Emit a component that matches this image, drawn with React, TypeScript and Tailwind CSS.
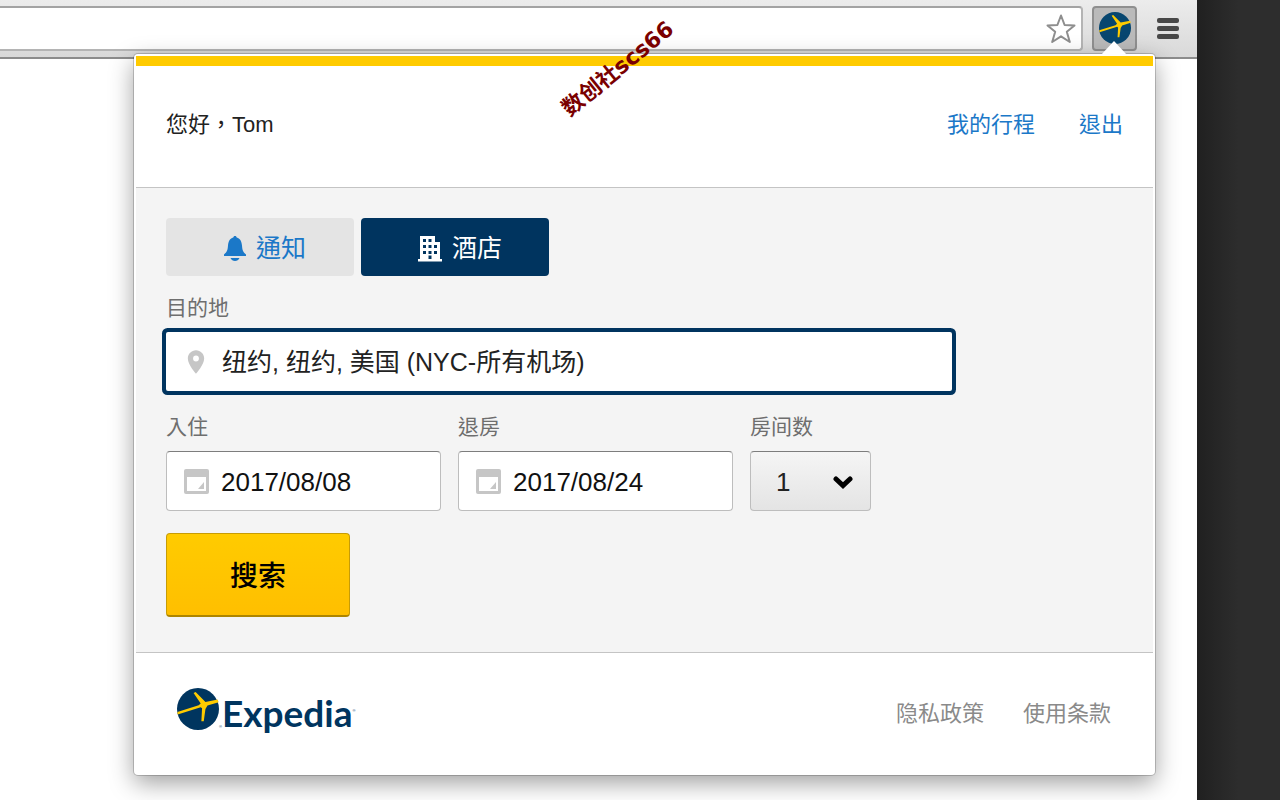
import { useState } from 'react';
import { MdPlace } from 'react-icons/md';

const GlobeLogo = ({ className }: { className?: string }) => (
  <svg viewBox="0 0 124 124" className={className} aria-hidden="true">
    <circle cx="62" cy="62" r="62" fill="currentColor" />
    <path
      d="M1 71 L64 51 L70 46 L49 15 L55 12 L84 41 L120 34 L123 42 L90 52 L84 62 L79 98 L72 98 L74 60 L70 57 L2 78 Z"
      fill="#fecb00"
    />
  </svg>
);

const BellIcon = () => (
  <svg viewBox="0 0 22 25" className="h-[25px] w-[22px]" fill="currentColor" aria-hidden="true">
    <path d="M11 0c1 0 1.600.7 1.700 1.500C16.500 2.500 17.700 6 18 9.500c.3 4.500 1 6.500 4 9V20H0v-1.500c3-2.500 3.700-4.500 4-9C4.300 6 5.500 2.500 9.300 1.500 9.400.7 10 0 11 0z" />
    <path d="M6.500 22h9c-.8 1.800-2.500 3-4.500 3s-3.700-1.200-4.500-3z" />
  </svg>
);

const BuildingIcon = () => (
  <svg viewBox="0 0 24 26" className="h-[26px] w-6" fill="currentColor" aria-hidden="true">
    <path
      fillRule="evenodd"
      d="M2 0h15v6h5v17h2v2.500H0V23h2zM5 3v3h3V3zM10.500 3v3h3V3zM5 9v3h3V9zM10.500 9v3h3V9zM16 9v3h3V9zM5 15v3h3v-3zM10.500 15v3h3v-3zM16 15v3h3v-3zM10.500 19.500V23h3v-3.500z"
    />
  </svg>
);

const CalendarIcon = () => (
  <svg viewBox="0 0 25 25" className="h-[25px] w-[25px]" aria-hidden="true">
    <rect width="25" height="25" rx="2" fill="#c6c6c6" />
    <rect x="3" y="8" width="19" height="14" fill="#fff" />
    <path d="M20 13v7h-6z" fill="#c6c6c6" />
  </svg>
);

interface DateFieldProps {
  id: string;
  label: string;
  value: string;
  onChange: (value: string) => void;
}

const DateField = ({ id, label, value, onChange }: DateFieldProps) => (
  <div className="w-[275px]">
    <label htmlFor={id} className="mb-2 block text-[21px] leading-8 text-[#6e6e6e]">
      {label}
    </label>
    <div className="flex h-[60px] items-center rounded-[4px] border border-[#bdbdbd] border-t-[#7d7d7d] bg-white pl-[17px]">
      <CalendarIcon />
      <input
        id={id}
        type="text"
        value={value}
        onChange={(e) => onChange(e.target.value)}
        className="min-w-0 flex-1 bg-transparent pt-0.5 pl-3 text-[26px] text-[#111] outline-none"
      />
    </div>
  </div>
);

const Toolbar = () => (
  <div className="flex h-[59px] items-start border-b-2 border-[#8c8c8c] bg-gradient-to-b from-[#ececec] to-[#d9d9d9] pt-[6px]">
    <div className="flex h-[45px] flex-1 items-center rounded-r-[4px] border-2 border-l-0 border-[#b4b4b4] border-t-[#a3a3a3] bg-white">
      <input type="text" aria-label="Address" className="min-w-0 flex-1 bg-transparent px-3 outline-none" />
      <button type="button" aria-label="Bookmark" className="mr-[5px]">
        <svg viewBox="0 0 30 30" className="h-[30px] w-[30px]" aria-hidden="true">
          <path
            d="M15 1.500 L18.600 11 L28.500 11.500 L20.800 17.800 L23.800 28 L15 22.300 L6.200 28 L9.200 17.800 L1.500 11.500 L11.400 11 Z"
            fill="#fff"
            stroke="#8e8e8e"
            strokeWidth="2"
            strokeLinejoin="round"
          />
        </svg>
      </button>
    </div>
    <button
      type="button"
      aria-label="Expedia"
      className="ml-[9px] flex h-[45px] w-[45px] items-start justify-center rounded-[4px] border-2 border-[#8f8f8f] bg-[#bababa] pt-1 text-[#07466f]"
    >
      <GlobeLogo className="h-8 w-8" />
    </button>
    <button type="button" aria-label="Menu" className="mt-3 mr-[18px] ml-5 flex w-[22px] flex-col gap-[3px]">
      <span className="h-[5px] w-full rounded-[2px] bg-[#484848]" />
      <span className="h-[5px] w-full rounded-[2px] bg-[#484848]" />
      <span className="h-[5px] w-full rounded-[2px] bg-[#484848]" />
    </button>
  </div>
);

const SearchForm = () => {
  const [destination, setDestination] = useState('纽约, 纽约, 美国 (NYC-所有机场)');
  const [checkIn, setCheckIn] = useState('2017/08/08');
  const [checkOut, setCheckOut] = useState('2017/08/24');
  const [rooms, setRooms] = useState('1');

  return (
    <form onSubmit={(e) => e.preventDefault()}>
      <label htmlFor="destination" className="mt-4 mb-2 block text-[21px] leading-8 text-[#6e6e6e]">
        目的地
      </label>
      <div className="flex h-[59px] max-w-[786px] items-center rounded-[2px] bg-white pl-4 ring-[4px] ring-[#00345f]">
        <MdPlace size={28} className="text-[#c6c6c6]" />
        <input
          id="destination"
          type="text"
          value={destination}
          onChange={(e) => setDestination(e.target.value)}
          className="min-w-0 flex-1 bg-transparent pt-0.5 pl-3 text-[25px] text-[#222] outline-none"
        />
      </div>

      <div className="mt-5 flex gap-[17px]">
        <DateField id="check-in" label="入住" value={checkIn} onChange={setCheckIn} />
        <DateField id="check-out" label="退房" value={checkOut} onChange={setCheckOut} />
        <div className="w-[121px]">
          <label htmlFor="rooms" className="mb-2 block text-[21px] leading-8 text-[#6e6e6e]">
            房间数
          </label>
          <div className="relative">
            <select
              id="rooms"
              value={rooms}
              onChange={(e) => setRooms(e.target.value)}
              className="h-[60px] w-full appearance-none rounded-[4px] border border-[#bdbdbd] border-t-[#7d7d7d] bg-gradient-to-b from-[#f5f5f5] to-[#e4e4e4] pt-0.5 pl-[25px] text-[26px] text-[#222] outline-none"
            >
              <option>1</option>
              <option>2</option>
              <option>3</option>
            </select>
            <svg
              viewBox="0 0 20 14"
              className="pointer-events-none absolute top-6 right-[18px] h-[14px] w-5"
              aria-hidden="true"
            >
              <path d="M3 4 L10 10.500 L17 4" fill="none" stroke="#000" strokeWidth="5" strokeLinecap="round" />
            </svg>
          </div>
        </div>
      </div>

      <button
        type="submit"
        className="mt-[22px] h-[84px] w-[184px] rounded-[4px] border border-b-2 border-[#c79c05] border-b-[#ad8500] bg-gradient-to-b from-[#ffcb00] to-[#ffbf00] pt-1 text-[28px] font-medium text-black"
      >
        搜索
      </button>
    </form>
  );
};

const Popup = () => (
  <div className="absolute top-[54px] right-[42px] left-[134px] rounded-[4px] bg-white p-0.5 shadow-[0_0_0_1px_rgba(0,0,0,0.18),0_8px_24px_rgba(0,0,0,0.38)]">
    <svg viewBox="0 0 26 14" className="absolute -top-[13px] right-7 h-[14px] w-[26px]" aria-hidden="true">
      <path d="M0 14 L13 0 L26 14 Z" fill="#fff" />
    </svg>

    <header className="flex h-[132px] items-center justify-between border-t-[10px] border-b border-t-[#ffcb00] border-b-[#c4c4c4] px-[30px] pb-1">
      <p className="text-[22px] text-[#222]">您好，Tom</p>
      <nav className="flex gap-11 text-[22px] text-[#1b78c8]">
        <a href="#trips">我的行程</a>
        <a href="#logout">退出</a>
      </nav>
    </header>

    <main className="bg-[#f4f4f4] px-[30px] pt-[30px] pb-[35px]">
      <div className="flex gap-[7px] text-[25px]">
        <button
          type="button"
          className="flex h-[58px] w-[188px] items-center justify-center gap-[10px] rounded-[4px] bg-[#e4e4e4] pt-[3px] pl-[10px] text-[#1b78c8]"
        >
          <BellIcon />
          通知
        </button>
        <button
          type="button"
          className="flex h-[58px] w-[188px] items-center justify-center gap-[10px] rounded-[4px] bg-[#00345f] pt-[3px] pl-[10px] text-white"
        >
          <BuildingIcon />
          酒店
        </button>
      </div>
      <SearchForm />
    </main>

    <footer className="flex h-[121px] items-center justify-between border-t border-[#c4c4c4] pr-[42px] pl-[41px]">
      <a href="#home" className="flex items-center text-[#00355f]">
        <GlobeLogo className="mb-2 h-[42px] w-[42px]" />
        <span className="mt-7 text-[4px]">®</span>
        <span className="font-['Lato'] text-[37px] font-bold">Expedia</span>
        <span className="mb-1 text-[4px]">®</span>
      </a>
      <nav className="flex gap-[39px] text-[22px] text-[#8a8a8a]">
        <a href="#privacy">隐私政策</a>
        <a href="#terms">使用条款</a>
      </nav>
    </footer>
  </div>
);

const App = () => (
  <div className="flex min-h-screen font-['Liberation_Sans','Noto_Sans_CJK_TC','Noto_Sans_CJK_SC',sans-serif]">
    <div className="relative flex-1 bg-white">
      <Toolbar />
      <Popup />
      <div className="pointer-events-none absolute top-[54px] left-[550px] -rotate-[39deg] font-['DejaVu_Sans','Noto_Sans_CJK_SC',sans-serif] text-[22px] leading-[30px] font-bold whitespace-nowrap text-[#7a0000]">
        数创社scs66
      </div>
    </div>
    <div className="w-[83px] bg-gradient-to-r from-[#202020] to-[#2d2d2d] to-50%" />
  </div>
);

export default App;
